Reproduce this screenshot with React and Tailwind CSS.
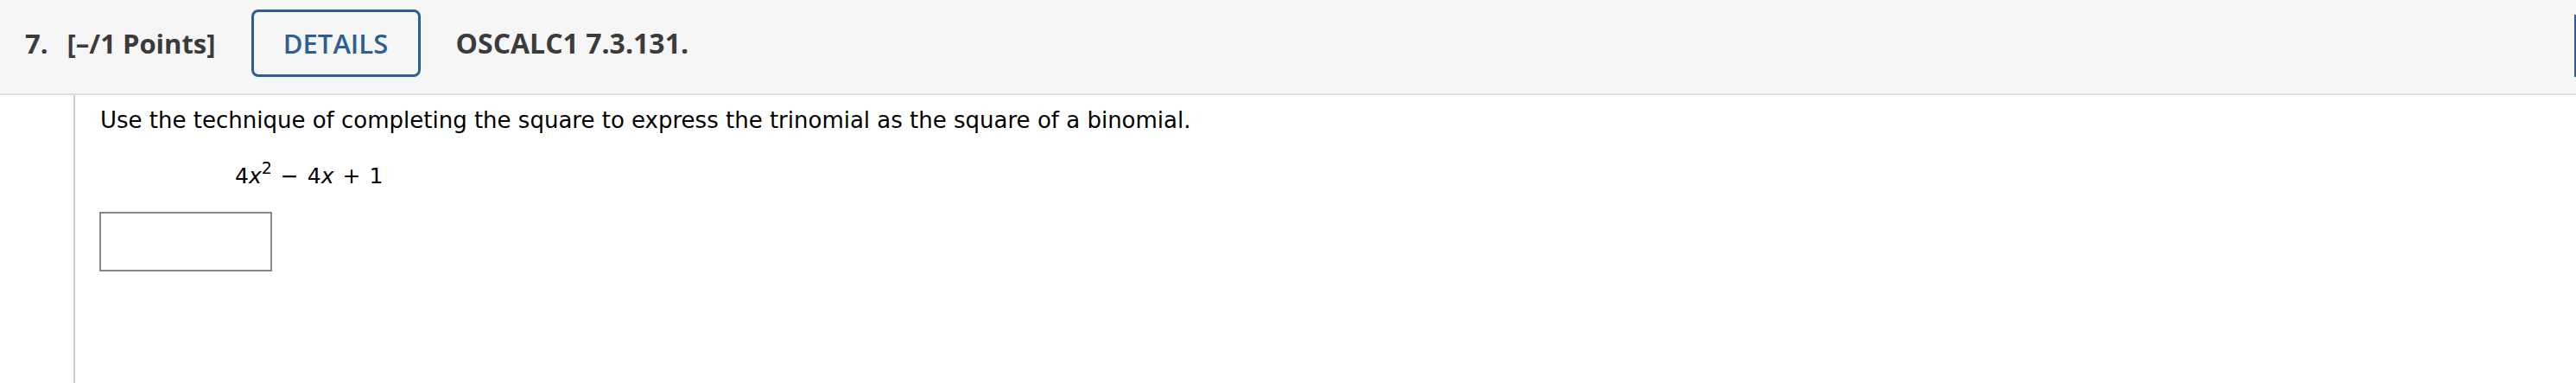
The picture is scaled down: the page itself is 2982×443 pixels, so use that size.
import React from "react";

export default function App() {
  return (
    <div className="w-[2982px] h-[443px] bg-white overflow-hidden flex flex-col">
      <div className="h-[110px] shrink-0 bg-[#f6f6f6] border-b-2 border-[#dddddd] flex items-center pb-[8px] pl-[29px] font-['Open_Sans',sans-serif] text-[32px] leading-none text-[#3b3b3b]">
        <span className="font-bold text-[31px]">7.</span>
        <span className="font-bold ml-[22px] text-[31px]">[–/1 Points]</span>
        <div className="ml-[41px] w-[196px] h-[78px] rounded-[8px] border-[3px] border-[#2c5f93] flex items-center justify-center text-[#2c5f93] font-semibold text-[31px]">
          DETAILS
        </div>
        <span className="font-bold ml-[41px]">OSCALC1 7.3.131.</span>
        <div className="ml-auto w-[2px] h-[72px] bg-[#2c5f93] mt-[6px]" />
      </div>
      <div className="flex flex-1">
        <div className="w-[85px] shrink-0" />
        <div className="w-[2px] shrink-0 bg-[#cccccc]" />
        <div className="pl-[29px] pt-[13px] font-['DejaVu_Sans',Verdana,sans-serif] text-black">
          <p className="text-[26px] leading-[32px]">
            Use the technique of completing the square to express the trinomial as the square of a binomial.
          </p>
          <div className="mt-[33px] ml-[156px] text-[25px] leading-[32px] whitespace-nowrap">
            4<i>x</i>
            <sup className="text-[19px] relative top-[-11px] align-baseline">2</sup>
            <span className="ml-[10px]">−</span>
            <span className="ml-[10px]">4<i>x</i></span>
            <span className="ml-[10px]">+</span>
            <span className="ml-[10px]">1</span>
          </div>
          <div className="mt-[25px] -ml-[1px] w-[200px] h-[69px] border-2 border-[#888888] bg-white" />
        </div>
      </div>
    </div>
  );
}
